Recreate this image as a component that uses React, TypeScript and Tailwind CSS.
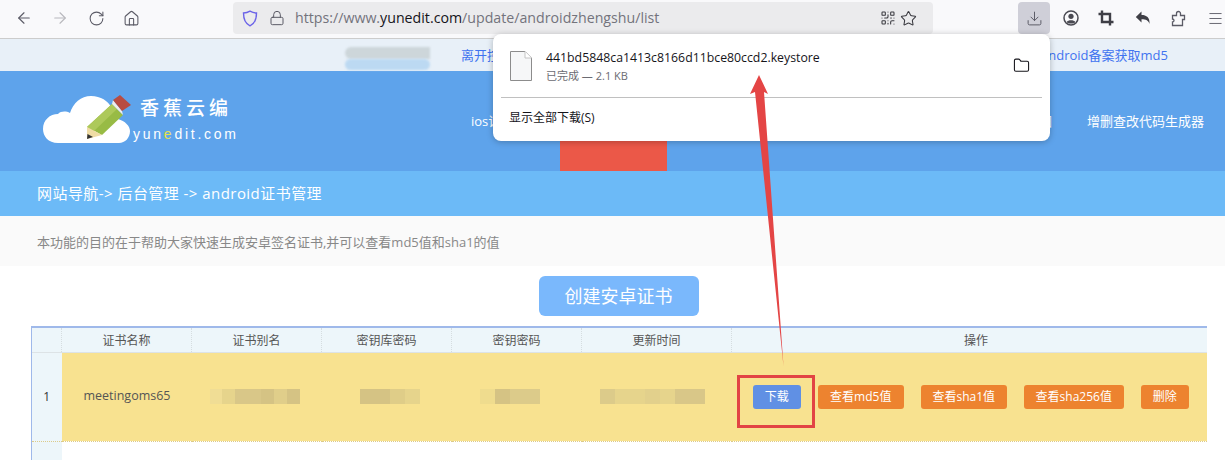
import React from 'react';
import { ArrowLeft, ArrowRight, RotateCw, Home, Lock, QrCode, Star, Download, Menu, Folder } from 'lucide-react';

const font = { fontFamily: '"Open Sans", "Noto Sans CJK SC", sans-serif' };

const headers = ['证书名称', '证书别名', '密钥库密码', '密钥密码', '更新时间'];
const blurs = [
  { cls: 'ml-[18px] w-[90px]', colors: ['#f0dd95', '#e6d48c', '#d9c788', '#d9c788', '#d5c384', '#e0ce8a', '#d5c384'] },
  { cls: 'ml-[38px] w-[60px]', colors: ['#d5c384', '#d5c384', '#dfcd88', '#e6d48c'] },
  { cls: 'ml-[28px] w-[60px]', colors: ['#efdc8e', '#d5c384', '#dccb8a', '#dccb8a'] },
  { cls: 'ml-[18px] w-[105px]', colors: ['#dccb8a', '#e6d48c', '#e6d48c', '#e2d08c', '#e6d48c', '#d9c788', '#d9c788'] },
];

const ActionBtn = ({ label, className }: { label: string; className: string }) => (
  <button className={`h-6 rounded-[3px] text-[12px] text-white ${className}`}>{label}</button>
);

const ToolbarBtn = ({ children, className = '' }: { children: React.ReactNode; className?: string }) => (
  <div className={`flex h-8 w-8 shrink-0 items-center justify-center text-[#5b5b66] ${className}`}>{children}</div>
);

const Logo = () => (
  <div className="flex items-start">
    <svg width="90" height="52" viewBox="0 0 90 52" className="shrink-0">
      <path d="M15 50 C5 50 0 43 0 36 C0 27 7 21 15 21 C18 18 23 18 27 20 C30 10 38 3 48 3 C58 3 65 8 68 14 L75 26 C82 28 87 33 87 38 C87 45 82 50 76 50 Z" fill="#fff" />
      <path d="M44 34 L69 11 L80 22 L59 42 Z" fill="#98bb45" />
      <path d="M44 34 L69 11 L74 16 L50 39 Z" fill="#adc95a" />
      <path d="M44 46 L44 34 L59 42 Z" fill="#efdca5" />
      <path d="M44 46 L44.5 41 L50 44 Z" fill="#333" />
      <path d="M69 11 L70 7 L79 18 L80 22 Z" fill="#eee" />
      <path d="M70 7 L77 2 L88 12 L79 18 Z" fill="#b84c42" />
    </svg>
    <div className="text-white" style={{ fontFamily: '"Liberation Sans", "Noto Sans CJK SC", sans-serif' }}>
      <div className="ml-[7px] mt-[4px] text-[19px] font-medium leading-[24px] tracking-[4px]">香蕉云编</div>
      <div className="mt-[4px] text-[14px] leading-[18px] tracking-[2.75px]">
        yun<span className="text-[#e6e04a]">e</span>dit.com
      </div>
    </div>
  </div>
);

export default function App() {
  return (
    <div className="relative h-[460px] w-[1225px] overflow-hidden bg-white" style={font}>
      {/* browser toolbar */}
      <div className="flex h-[39px] items-center border-b border-[#cccccc] bg-[#f9f9fb] pb-[2px] pl-[8px]">
        <ToolbarBtn><ArrowLeft size={18} strokeWidth={1.5} /></ToolbarBtn>
        <ToolbarBtn className="ml-[4px] text-[#b8b8bd]"><ArrowRight size={18} strokeWidth={1.5} /></ToolbarBtn>
        <ToolbarBtn className="ml-[4px]"><RotateCw size={17} strokeWidth={1.5} /></ToolbarBtn>
        <ToolbarBtn className="ml-[3px]"><Home size={17} strokeWidth={1.5} /></ToolbarBtn>
        <div className="ml-[86px] flex h-8 w-[700px] shrink-0 items-center rounded-[4px] bg-[#ebebed] pl-[9px] pr-[16px]">
          <svg width="16" height="17" viewBox="0 0 16 17" fill="none" stroke="#6b63e8" strokeWidth="1.4">
            <path d="M8 1.2 C10 2.4 12.5 3 14.5 3 C14.5 9 13 13.5 8 15.8 C3 13.5 1.5 9 1.5 3 C3.5 3 6 2.4 8 1.2 Z" />
          </svg>
          <Lock size={16} strokeWidth={1.5} className="ml-[11px] text-[#5b5b66]" />
          <div className="ml-[10px] flex-1 text-[14.2px] text-[#73737c]">
            https://www.<span className="text-[#15141a]">yunedit.com</span>/update/androidzhengshu/list
          </div>
          <QrCode size={16} strokeWidth={1.6} className="text-[#3a3a40]" />
          <Star size={17} strokeWidth={1.5} className="ml-[4px] text-[#3a3a40]" />
        </div>
        <ToolbarBtn className="ml-[85px] rounded-[4px] bg-[#cfcfd8]"><Download size={17} strokeWidth={1.4} /></ToolbarBtn>
        <ToolbarBtn className="ml-[5px]">
          <svg width="16" height="16" viewBox="0 0 16 16">
            <circle cx="8" cy="8" r="7" fill="none" stroke="#4a4a52" strokeWidth="1.5" />
            <circle cx="8" cy="6.3" r="2.6" fill="#4a4a52" />
            <path d="M3.6 12 C5 9.8 11 9.8 12.4 12 C11 14 5 14 3.6 12 Z" fill="#4a4a52" />
          </svg>
        </ToolbarBtn>
        <ToolbarBtn className="ml-[3px]">
          <svg width="16" height="16" viewBox="0 0 16 16" fill="none" stroke="#3f3f46" strokeWidth="2.4">
            <path d="M4 0.5 V12 H15.5 M0.5 4 H12 V15.5" />
          </svg>
        </ToolbarBtn>
        <ToolbarBtn className="ml-[5px]">
          <svg width="16" height="16" viewBox="0 0 16 16" fill="#3f3f46">
            <path d="M6.5 1.5 V5 C11.5 5 15 7.5 14.5 14 C13.5 10.5 11 9.2 6.5 9.2 V12.5 L0.8 7 Z" />
          </svg>
        </ToolbarBtn>
        <ToolbarBtn className="ml-[3px]">
          <svg width="16" height="17" viewBox="0 0 16 17" fill="none" stroke="#5b5b66" strokeWidth="1.3">
            <path d="M2.5 15.5 H12.5 V9.5 H14.5 V5.5 H10.5 V3.5 A2 2 0 0 0 6.5 3.5 V5.5 H2.5 V9 A1.5 1.5 0 0 1 2.5 12 Z" />
          </svg>
        </ToolbarBtn>
        <ToolbarBtn className="ml-[5px]"><Menu size={17} strokeWidth={1.3} /></ToolbarBtn>
      </div>

      {/* top strip */}
      <div className="flex h-[32px] items-center justify-between bg-[#e8f0f8] pl-[461px] pr-[57px] pt-[2px] text-[13px] text-[#3f73f0]">
        <span>离开控制台</span>
        <span>android备案获取md5</span>
      </div>

      {/* site header */}
      <div className="flex h-[100px] items-stretch justify-between bg-[#5ea3eb] pl-[43px] pr-[21px]">
        <div className="pt-[22px]">
          <Logo />
        </div>
        <nav className="flex items-stretch text-[13px] text-white">
          <span className="flex w-[89px] items-center pt-[2px]">ios证</span>
          <span className="w-[107px] bg-[#eb5848]" />
          <span className="flex w-[420px] items-center justify-end pr-[35px] pt-[2px]">图</span>
          <span className="flex items-center pt-[2px]">增删查改代码生成器</span>
        </nav>
      </div>

      {/* breadcrumb */}
      <div className="flex h-[45px] items-center bg-[#6cbaf7] pl-[37px] text-[15px] tracking-[0.45px] text-white">
        网站导航-&gt; 后台管理 -&gt; android证书管理
      </div>

      {/* description */}
      <div className="flex h-[50px] items-center bg-[#fafafa] pl-[37px] pt-[3px] text-[13px] text-[#888888]">
        本功能的目的在于帮助大家快速生成安卓签名证书,并可以查看md5值和sha1的值
      </div>

      <div className="flex justify-center pl-[12px] pt-[10px]">
        <button className="h-10 w-[160px] rounded-[6px] bg-[#7ab8fc] text-[18px] text-white">创建安卓证书</button>
      </div>

      {/* table */}
      <table className="ml-[31px] mt-[10px] w-[1176px] table-fixed border-collapse text-[12px] text-[#555555]">
        <colgroup>
          <col className="w-[30px]" />
          <col className="w-[130px]" />
          <col className="w-[130px]" />
          <col className="w-[130px]" />
          <col className="w-[130px]" />
          <col className="w-[150px]" />
          <col />
        </colgroup>
        <thead>
          <tr className="h-[25px] border-t-2 border-b border-[#9fb9ea] border-b-[#dde3e6] bg-[#edf6fa]">
            <th className="border-l border-[#9fb9ea] font-normal" />
            {headers.map(h => (
              <th key={h} className="border-l border-dotted border-[#d5dde0] pt-[2px] font-normal">{h}</th>
            ))}
            <th className="border-l border-dotted border-[#d5dde0] pl-[13px] pt-[2px] font-normal">操作</th>
          </tr>
        </thead>
        <tbody>
          <tr className="h-[89px] border-b border-dotted border-[#dccb8a] bg-[#f8e290]">
            <td className="border-l border-[#9fb9ea] bg-[#edf6fa] text-center text-[#333333]">1</td>
            <td className="pl-[1px] text-center text-[12.5px]">meetingoms65</td>
            {blurs.map((b, i) => (
              <td key={i}>
                <div className={`flex h-[15px] ${b.cls}`}>
                  {b.colors.map((c, j) => (
                    <div key={j} className="h-full flex-1" style={{ backgroundColor: c }} />
                  ))}
                </div>
              </td>
            ))}
            <td>
              <div className="flex items-center justify-center gap-[17px] pl-[3px]">
                <ActionBtn label="下载" className="w-12 bg-[#6090e4]" />
                <ActionBtn label="查看md5值" className="w-[86px] bg-[#ed832f]" />
                <ActionBtn label="查看sha1值" className="w-[86px] bg-[#ed832f]" />
                <ActionBtn label="查看sha256值" className="w-[100px] bg-[#ed832f]" />
                <ActionBtn label="删除" className="w-12 bg-[#ed832f]" />
              </div>
            </td>
          </tr>
          <tr className="h-[30px]">
            <td className="border-l border-[#9fb9ea] bg-[#edf6fa]" />
            <td colSpan={6} />
          </tr>
        </tbody>
      </table>

      {/* blurred username in the top strip */}
      <div className="absolute left-[345px] top-[47px] h-[12px] w-[85px] rounded-l-full bg-[#cdd6da] blur-[1px]" />
      <div className="absolute left-[345px] top-[59px] h-[11px] w-[85px] rounded-full bg-[#bcd9f2] blur-[1px]" />

      {/* download panel */}
      <div className="absolute left-[493px] top-[34px] h-[107px] w-[557px] rounded-[8px] bg-white shadow-[0_1px_6px_rgba(0,0,0,0.25)]">
        <div className="flex h-[63px] items-center pl-[17px] pr-[20px]">
          <svg width="22" height="30" viewBox="0 0 22 30" className="shrink-0">
            <path d="M0.5 0.5 H15 L21.5 7 V29.5 H0.5 Z" fill="#f6f7f8" stroke="#8c8c8c" />
            <path d="M15 0.5 V7 H21.5" fill="#fff" stroke="#c4c4c4" />
          </svg>
          <div className="ml-[14px] flex-1 pt-[1px]">
            <div className="text-[12.3px] leading-[20px] text-[#15141a]">441bd5848ca1413c8166d11bce80ccd2.keystore</div>
            <div className="text-[11px] leading-[16px] text-[#6b6b72]">已完成 — 2.1 KB</div>
          </div>
          <Folder size={17} strokeWidth={1.5} className="text-[#15141a]" />
        </div>
        <div className="mx-[8px] h-px bg-[#c0c0c0]" />
        <div className="flex h-[40px] items-center pl-[16px] text-[12px] text-[#15141a]">显示全部下载(S)</div>
      </div>

      {/* annotation: red box and arrow */}
      <div className="absolute left-[737px] top-[375px] h-[53px] w-[78px] border-[3px] border-[#e24444]" />
      <svg className="absolute left-[740px] top-[70px]" width="60" height="300" viewBox="0 0 60 300">
        <path d="M19 5 L28 24 L24 22 L43.5 296 L15 22 L10 24 Z" fill="#e44545" />
      </svg>
    </div>
  );
}
